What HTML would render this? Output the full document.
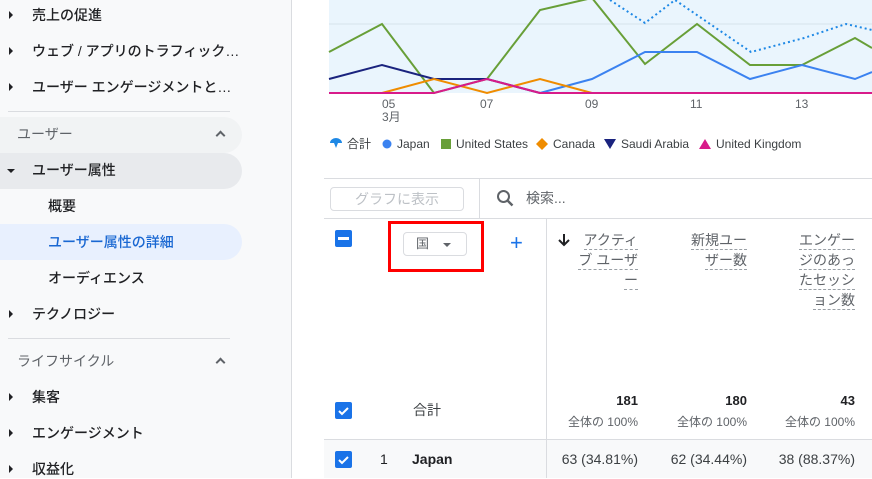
<!DOCTYPE html>
<html><head><meta charset="utf-8"><style>
*{margin:0;padding:0;box-sizing:border-box}
body{width:872px;height:478px;overflow:hidden;position:relative;background:#fff;font-family:"Liberation Sans","Noto Sans CJK JP",sans-serif;color:#202124;font-size:14px}
.a{position:absolute;white-space:nowrap}
#side{position:absolute;left:0;top:0;width:292px;height:478px;background:#f8f9fa;border-right:1px solid #dadce0}
.it{position:absolute;left:32px;font-size:14px;line-height:20px;color:#202124;font-weight:500}
.tri{position:absolute;left:9px;width:0;height:0;border-top:4px solid transparent;border-bottom:4px solid transparent;border-left:4px solid #202124}
.hr{position:absolute;left:8px;width:222px;height:1px;background:#dadce0}
.pill{position:absolute;left:0;width:242px;height:36px;border-radius:0 18px 18px 0}
.hd{position:absolute;left:17px;color:#5f6368;font-size:14px;line-height:20px}
.car{position:absolute;left:217px;width:7px;height:7px;border-left:2px solid #5f6368;border-top:2px solid #5f6368;transform:rotate(45deg)}
.cb{position:absolute;width:17px;height:17px;border-radius:2px;background:#1a73e8}
.hl{position:absolute;font-size:14px;line-height:20px;color:#5f6368;text-align:right}
.hl span{display:inline-block;border-bottom:1px dashed #9aa0a6;line-height:18px}
</style></head><body>
<div id="side">
<div class="tri" style="top:11px"></div><div class="it" style="top:5px">売上の促進</div>
<div class="tri" style="top:47px"></div><div class="it" style="top:41px">ウェブ / アプリのトラフィック…</div>
<div class="tri" style="top:83px"></div><div class="it" style="top:77px">ユーザー エンゲージメントと…</div>
<div class="hr" style="top:111px"></div>
<div class="pill" style="top:117px;background:#f1f3f4"></div>
<div class="hd" style="top:124px">ユーザー</div><div class="car" style="top:132px"></div>
<div class="pill" style="top:153px;background:#e8eaed"></div>
<div class="a" style="left:7px;top:169px;border-left:4px solid transparent;border-right:4px solid transparent;border-top:4px solid #202124"></div>
<div class="it" style="top:160px">ユーザー属性</div>
<div class="it" style="top:196px;left:48px">概要</div>
<div class="pill" style="top:224px;background:#e8f0fe"></div>
<div class="it" style="top:232px;left:48px;color:#1967d2">ユーザー属性の詳細</div>
<div class="it" style="top:268px;left:48px">オーディエンス</div>
<div class="tri" style="top:310px"></div><div class="it" style="top:304px">テクノロジー</div>
<div class="hr" style="top:338px"></div>
<div class="hd" style="top:351px">ライフサイクル</div><div class="car" style="top:359px"></div>
<div class="tri" style="top:393px"></div><div class="it" style="top:387px">集客</div>
<div class="tri" style="top:429px"></div><div class="it" style="top:423px">エンゲージメント</div>
<div class="tri" style="top:465px"></div><div class="it" style="top:459px">収益化</div>
</div>

<svg class="a" style="left:0;top:0" width="872" height="160">
<rect x="329" y="0" width="543" height="93" fill="#eaf5fd"/>
<line x1="329" y1="24" x2="872" y2="24" stroke="#d6e2ec"/>
<polyline fill="none" stroke="#1e88e5" stroke-width="2" stroke-dasharray="2,3" points="610,0 645,23 675,0 751,52 804,38 846,24 872,30"/>
<polyline fill="none" stroke="#689f38" stroke-width="2" points="329,52 382,24 434,93 487,79 540,10 592,-2 645,64 697,24 750,65 802,65 855,38 872,48"/>
<polyline fill="none" stroke="#3b82f0" stroke-width="2" points="540,93 592,79 645,52 697,52 750,79 802,65 855,79 872,72"/>
<polyline fill="none" stroke="#1a237e" stroke-width="2" points="329,79 382,65 434,79 487,79 540,93"/>
<polyline fill="none" stroke="#ef8c00" stroke-width="2" points="382,93 434,79 487,93 540,79 592,93"/>
<polyline fill="none" stroke="#d81b8a" stroke-width="2" points="329,93 434,93 487,79 540,93 872,93"/>
<g font-size="12" fill="#5f6368" font-family="Liberation Sans,sans-serif">
<text x="382" y="108">05</text><text x="382" y="121" font-family="Liberation Sans,Noto Sans CJK JP,sans-serif">3月</text>
<text x="480" y="108">07</text><text x="585" y="108">09</text><text x="690" y="108">11</text><text x="795" y="108">13</text>
</g>
<g font-size="12" fill="#3c4043" font-family="Liberation Sans,Noto Sans CJK JP,sans-serif">
<path d="M330 143 a6 5 0 0 1 12 0 h-4 l-2 5 l-2 -5z" fill="#1e88e5"/><text x="347" y="148">合計</text>
<circle cx="387" cy="144" r="4.5" fill="#3b82f0"/><text x="397" y="148">Japan</text>
<rect x="441" y="139" width="10" height="10" fill="#689f38"/><text x="456" y="148">United States</text>
<path d="M542 138 l6 6 l-6 6 l-6 -6z" fill="#ef8c00"/><text x="553" y="148">Canada</text>
<path d="M604 139 h12 l-6 10z" fill="#1a237e"/><text x="621" y="148">Saudi Arabia</text>
<path d="M699 149 h12 l-6 -10z" fill="#d81b8a"/><text x="716" y="148">United Kingdom</text>
</g>
</svg>

<div class="a" style="left:324px;top:178px;width:548px;height:1px;background:#dadce0"></div>
<div class="a" style="left:324px;top:218px;width:548px;height:1px;background:#dadce0"></div>
<div class="a" style="left:479px;top:178px;width:1px;height:40px;background:#dadce0"></div>
<div class="a" style="left:330px;top:187px;width:134px;height:24px;border:1px solid #dadce0;border-radius:4px;color:#bdc1c6;font-size:14px;line-height:22px;text-align:center">グラフに表示</div>
<svg class="a" style="left:496px;top:189px" width="20" height="20"><circle cx="7.5" cy="7.5" r="5.5" fill="none" stroke="#5f6368" stroke-width="2"/><line x1="11.5" y1="11.5" x2="16.5" y2="16.5" stroke="#5f6368" stroke-width="2.4"/></svg>
<div class="a" style="left:526px;top:188px;color:#5f6368;font-size:14px;line-height:20px">検索...</div>

<div class="a" style="left:546px;top:218px;width:1px;height:260px;background:#dadce0"></div>
<div class="cb" style="left:335px;top:230px"><div class="a" style="left:3px;top:7px;width:11px;height:2.5px;background:#fff"></div></div>
<div class="a" style="left:388px;top:221px;width:96px;height:51px;border:3px solid #f00"></div>
<div class="a" style="left:403px;top:232px;width:64px;height:24px;border:1px solid #dadce0;border-radius:4px;color:#5f6368;font-size:13px;line-height:22px;padding-left:12px">国<span class="a" style="left:39px;top:10px;border-left:4px solid transparent;border-right:4px solid transparent;border-top:4px solid #5f6368"></span></div>
<div class="a" style="left:510px;top:231px;color:#1a73e8;font-size:22px;line-height:24px">+</div>
<svg class="a" style="left:557px;top:232px" width="14" height="16"><path d="M7 2v11M2 8l5 5 5-5" fill="none" stroke="#202124" stroke-width="2"/></svg>
<div class="hl" style="right:234px;top:230px"><span>アクティ</span><br><span>ブ ユーザ</span><br><span>ー</span></div>
<div class="hl" style="right:125px;top:230px"><span>新規ユー</span><br><span>ザー数</span></div>
<div class="hl" style="right:17px;top:230px"><span>エンゲー</span><br><span>ジのあっ</span><br><span>たセッシ</span><br><span>ョン数</span></div>

<div class="cb" style="left:335px;top:402px"><svg width="17" height="17"><path d="M4 9l3 3 6-6" fill="none" stroke="#fff" stroke-width="2"/></svg></div>
<div class="a" style="left:413px;top:400px;color:#3c4043;font-size:14px;line-height:20px">合計</div>
<div class="a" style="right:234px;top:392px;font-size:13px;font-weight:bold;line-height:18px;text-align:right">181</div>
<div class="a" style="right:125px;top:392px;font-size:13px;font-weight:bold;line-height:18px">180</div>
<div class="a" style="right:17px;top:392px;font-size:13px;font-weight:bold;line-height:18px">43</div>
<div class="a" style="right:234px;top:413px;font-size:12px;color:#5f6368;line-height:18px">全体の 100%</div>
<div class="a" style="right:125px;top:413px;font-size:12px;color:#5f6368;line-height:18px">全体の 100%</div>
<div class="a" style="right:17px;top:413px;font-size:12px;color:#5f6368;line-height:18px">全体の 100%</div>

<div class="a" style="left:324px;top:439px;width:548px;height:39px;background:#f8f9fa;border-top:1px solid #dadce0"></div>
<div class="a" style="left:546px;top:440px;width:1px;height:38px;background:#dadce0"></div>
<div class="cb" style="left:335px;top:451px"><svg width="17" height="17"><path d="M4 9l3 3 6-6" fill="none" stroke="#fff" stroke-width="2"/></svg></div>
<div class="a" style="left:380px;top:449px;font-size:14px;line-height:20px">1</div>
<div class="a" style="left:412px;top:449px;font-size:14px;line-height:20px;font-weight:bold">Japan</div>
<div class="a" style="right:234px;top:449px;font-size:14px;line-height:20px;color:#3c4043">63 (34.81%)</div>
<div class="a" style="right:125px;top:449px;font-size:14px;line-height:20px;color:#3c4043">62 (34.44%)</div>
<div class="a" style="right:17px;top:449px;font-size:14px;line-height:20px;color:#3c4043">38 (88.37%)</div>
</body></html>
